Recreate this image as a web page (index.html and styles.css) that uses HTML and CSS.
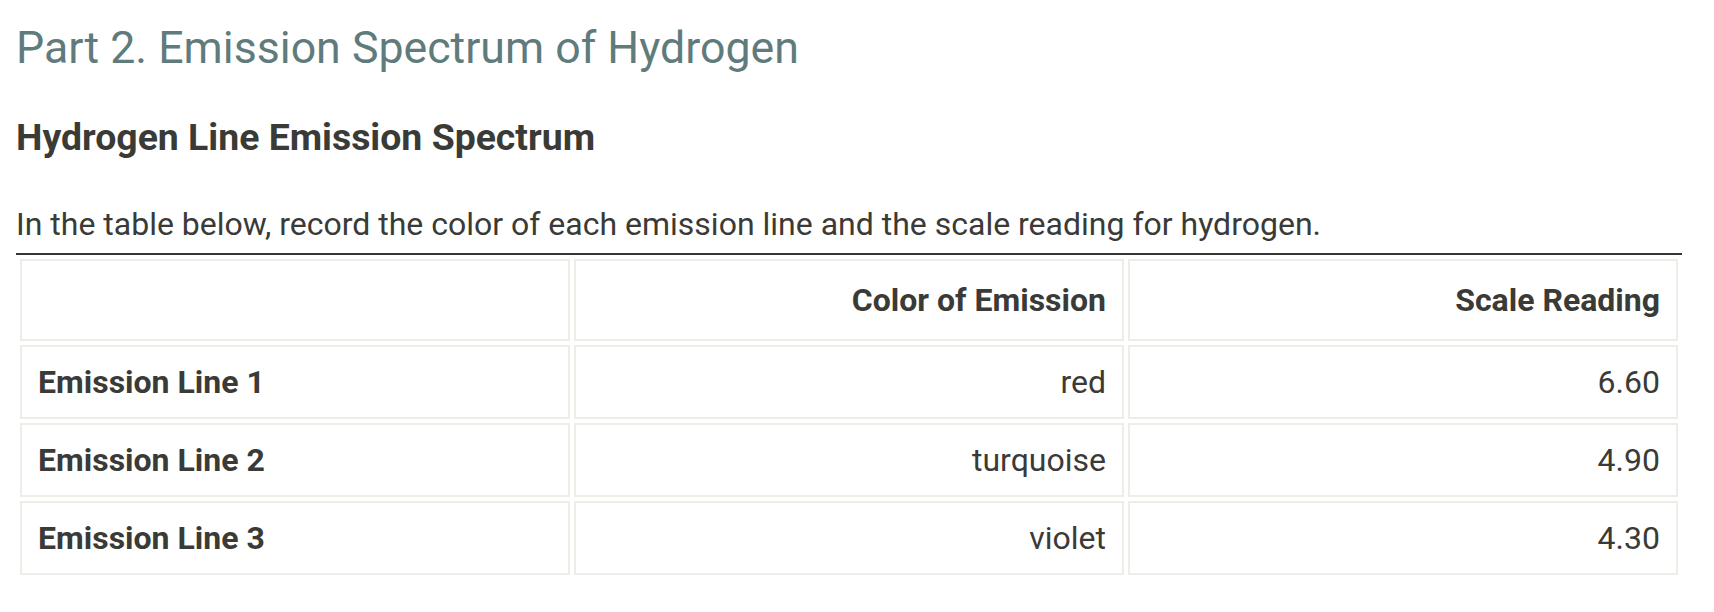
FILE: index.html
```html
<!DOCTYPE html>
<html lang="en">
<head>
<meta charset="utf-8">
<title>Part 2. Emission Spectrum of Hydrogen</title>
<link rel="stylesheet" href="styles.css">
</head>
<body>
<main class="page">
  <h1 class="title">Part 2. Emission Spectrum of Hydrogen</h1>
  <h2 class="subtitle">Hydrogen Line Emission Spectrum</h2>
  <p class="intro">In the table below, record the color of each emission line and the scale reading for hydrogen.</p>
  <table class="data">
    <thead>
      <tr>
        <th class="rowhead"></th>
        <th>Color of Emission</th>
        <th>Scale Reading</th>
      </tr>
    </thead>
    <tbody>
      <tr>
        <th class="rowhead" scope="row">Emission Line 1</th>
        <td>red</td>
        <td>6.60</td>
      </tr>
      <tr>
        <th class="rowhead" scope="row">Emission Line 2</th>
        <td>turquoise</td>
        <td>4.90</td>
      </tr>
      <tr>
        <th class="rowhead" scope="row">Emission Line 3</th>
        <td>violet</td>
        <td>4.30</td>
      </tr>
    </tbody>
  </table>
</main>
</body>
</html>
```

FILE: styles.css
```css
html, body {
  margin: 0;
  padding: 0;
  background: #ffffff;
}

body {
  font-family: Roboto, "Liberation Sans", Arial, sans-serif;
  color: #3a3a37;
}

.page {
  padding: 0 32px 0 16px;
}

.title {
  margin: 22px 0 0;
  font-size: 44.7px;
  line-height: 52px;
  font-weight: 400;
  color: #5f7b7c;
}

.subtitle {
  margin: 41px 0 0;
  font-size: 37.4px;
  line-height: 44px;
  font-weight: 700;
  color: #3a3a37;
}

.intro {
  margin: 46px 0 0;
  font-size: 32px;
  line-height: 38px;
  font-weight: 400;
}

.data {
  margin-top: 10px;
  width: 100%;
  border-collapse: separate;
  border-spacing: 4px;
  border-top: 2px solid #363633;
  table-layout: fixed;
}

.data th,
.data td {
  border: 2px solid #eeeee9;
  padding: 16px;
  font-size: 32px;
  line-height: 38px;
  text-align: right;
  color: #3a3a37;
}

.data th {
  font-weight: 700;
}

.data td {
  font-weight: 400;
}

.data thead th {
  padding: 20px 16px 20px;
}

.data .rowhead {
  text-align: left;
}
```
